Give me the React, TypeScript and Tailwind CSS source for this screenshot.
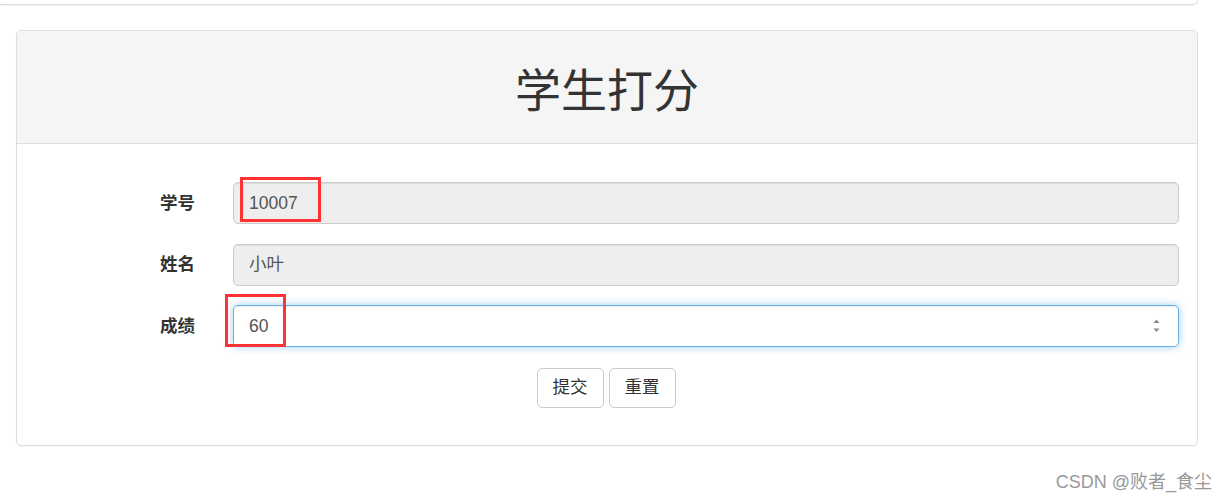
const font = { fontFamily: '"Liberation Sans", "Noto Sans CJK SC", sans-serif' };

function Field({ label, value, disabled, focused }: { label: string; value: string; disabled?: boolean; focused?: boolean }) {
  return (
    <div className="flex items-center h-[42px]">
      <label className="w-[179px] text-right text-[17.5px] font-bold text-[#333] pr-[1px]">{label}</label>
      <div
        className={
          "ml-[37px] flex-1 h-[42px] rounded-[5px] border flex items-center px-[15px] text-[17.5px] text-[#555] " +
          (disabled
            ? "bg-[#eeeeee] border-[#cccccc] shadow-[inset_0_1px_1px_rgba(0,0,0,0.075)]"
            : "bg-white border-[#66afe9] shadow-[inset_0_1px_1px_rgba(0,0,0,0.075),0_0_8px_rgba(102,175,233,0.6)]")
        }
      >
        <span className="flex-1">{value}</span>
        {focused && (
          <svg width="9" height="18" viewBox="0 0 9 18" className="mr-[2px]">
            <path d="M1.5 6 L4.5 2.5 L7.5 6 Z" fill="#8a8a8a" />
            <path d="M1.5 11.5 L4.5 15 L7.5 11.5 Z" fill="#8a8a8a" />
          </svg>
        )}
      </div>
    </div>
  );
}

export default function App() {
  return (
    <div className="relative w-[1228px] h-[499px] bg-white overflow-hidden" style={font}>
      <div className="w-[1198px] h-[5px] border-b border-r border-[#dddddd] rounded-br-[5px] shadow-[0_1px_1px_rgba(0,0,0,0.05)]" />
      <div className="ml-[16px] mt-[25px] w-[1182px] border border-[#dddddd] rounded-[5px] shadow-[0_1px_1px_rgba(0,0,0,0.05)]">
        <div className="h-[113px] bg-[#f5f5f5] border-b border-[#dddddd] rounded-t-[5px] flex items-center justify-center">
          <h1 className="text-[46px] leading-[1.1] text-[#333] font-normal mt-[8px]">学生打分</h1>
        </div>
        <div className="pt-[38px] pb-[37.5px] pr-[18px] flex flex-col gap-[19.5px]">
          <Field label="学号" value="10007" disabled />
          <Field label="姓名" value="小叶" disabled />
          <Field label="成绩" value="60" focused />
          <div className="flex justify-center gap-[5px] pl-[16px] mt-[1px]">
            <button className="h-[40px] px-[15px] border border-[#cccccc] rounded-[5px] bg-white text-[17.5px] text-[#333]">提交</button>
            <button className="h-[40px] px-[15px] border border-[#cccccc] rounded-[5px] bg-white text-[17.5px] text-[#333]">重置</button>
          </div>
        </div>
      </div>
      <div className="absolute left-[240px] top-[177px] w-[81px] h-[45px] border-[3px] border-[#ff3333]" />
      <div className="absolute left-[225px] top-[294px] w-[61px] h-[53px] border-[3px] border-[#ff3333]" />
      <div className="absolute right-[16px] top-[469px] text-[18px] text-[#999999]">CSDN @败者_食尘</div>
    </div>
  );
}
